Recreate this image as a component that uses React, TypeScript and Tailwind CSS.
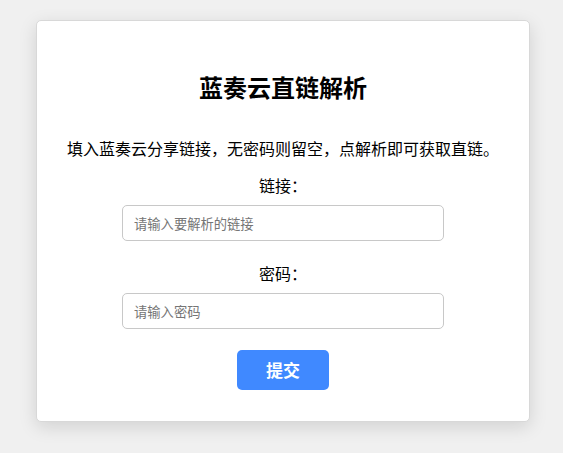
import React from "react";

export default function App() {
  return (
    <div
      className="min-h-[453px] w-full bg-[#f0f0f0] pt-[20px] pb-[10px] pl-[3px]"
      style={{ fontFamily: '"Noto Sans CJK SC", "Noto Sans", sans-serif' }}
    >
      <div className="mx-auto w-[494px] rounded-[5px] border border-[#d8d8d8] bg-white pt-[51px] pb-[31px] shadow-[0_5px_18px_rgba(0,0,0,0.13)] flex flex-col items-center text-black">
        <h1 className="m-0 text-[24px] leading-[30px] font-bold">蓝奏云直链解析</h1>
        <p className="mt-[34px] text-[16px] leading-[24px]">
          填入蓝奏云分享链接，无密码则留空，点解析即可获取直链。
        </p>
        <label className="mt-[13px] text-[16px] leading-[24px]">链接：</label>
        <input
          type="text"
          placeholder="请输入要解析的链接"
          className="mt-[8px] h-[36px] w-[322px] rounded-[5px] border border-[#c8c8c8] bg-white px-[11px] text-[13.3px] text-black outline-none placeholder:text-[#757575]"
        />
        <label className="mt-[20px] text-[16px] leading-[24px]">密码：</label>
        <input
          type="text"
          placeholder="请输入密码"
          className="mt-[8px] h-[36px] w-[322px] rounded-[5px] border border-[#c8c8c8] bg-white px-[11px] text-[13.3px] text-black outline-none placeholder:text-[#757575]"
        />
        <button
          type="button"
          className="mt-[21px] h-[40px] w-[92px] rounded-[5px] bg-[#4089ff] text-[17px] font-bold text-white"
        >
          提交
        </button>
      </div>
    </div>
  );
}
